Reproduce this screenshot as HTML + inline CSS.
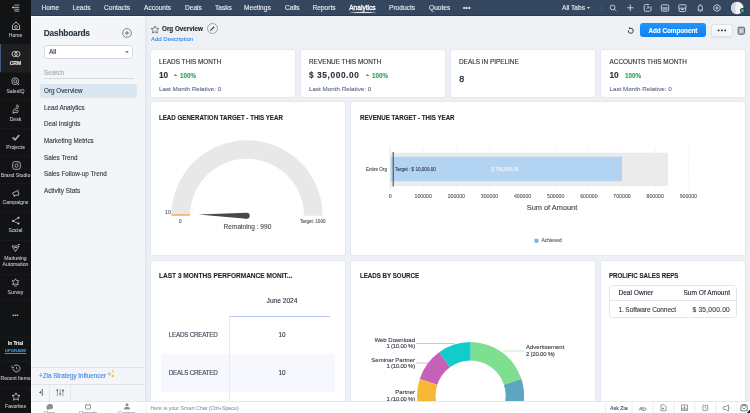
<!DOCTYPE html>
<html><head><meta charset="utf-8">
<style>
*{margin:0;padding:0;box-sizing:border-box}
html,body{width:750px;height:413px;overflow:hidden;background:#eef0f4;font-family:"Liberation Sans",sans-serif;position:relative}
#root div{-webkit-text-stroke-width:0.12px}
.a{position:absolute;white-space:nowrap}
#lsb{left:0;top:0;width:31px;height:413px;background:#121314}
.si{position:absolute;left:0;width:31px;text-align:center;color:#bbbcbf;font-size:5.1px;line-height:5px}
.sep{position:absolute;left:0;width:31px;height:1px;background:#19191b}
#nav{left:31px;top:0;width:719px;height:16px;background:#34475f}
.ni{position:absolute;top:3px;color:#e6ebf1;font-size:6.6px;line-height:10px}
#dp{left:31px;top:16px;width:114.5px;height:385px;background:#f3f5f8;border-right:1px solid #e4e7ec;box-shadow:1px 0 1.5px rgba(40,50,70,0.05)}
.dl{position:absolute;left:13px;color:#333a47;font-size:6.3px;line-height:8px;margin-top:0.3px}
.card{position:absolute;background:#fff;border:1px solid #e1e9f6;border-radius:3px}
.ct{position:absolute;color:#2b2f36;font-size:6.4px;line-height:8px}
.ttl{position:absolute;color:#1f2329;font-size:6.85px;line-height:8px;font-weight:bold;transform:scaleX(0.9);transform-origin:0 0}
#bb{left:31px;top:401px;width:719px;height:12px;background:#fff;border-top:1px solid #e4e7ec}
</style></head><body>
<div id="root" style="position:absolute;left:0;top:0;width:750px;height:413px;overflow:hidden;will-change:transform;background:#eef0f4">

<!-- left sidebar -->
<div class="a" id="lsb">
  <div class="sep" style="top:43.5px"></div>
  <div style="position:absolute;left:0;top:43.5px;width:31px;height:28.3px;background:#1e1f20;border-left:1.6px solid #405a7b"></div>
  <div class="sep" style="top:72px"></div>
  <div class="sep" style="top:100px"></div>
  <div class="sep" style="top:127.5px"></div>
  <div class="sep" style="top:155.5px"></div>
  <div class="sep" style="top:183px"></div>
  <div class="sep" style="top:211px"></div>
  <div class="sep" style="top:239.5px"></div>
  <div class="sep" style="top:273.5px"></div>
  <div class="sep" style="top:300px"></div>
  <div class="sep" style="top:336.5px"></div>
  <div class="sep" style="top:360.5px"></div>
  <div class="sep" style="top:387.5px"></div>
  <!-- collapse icon -->
  <svg class="a" style="left:0;top:0" width="31" height="16" viewBox="0 0 31 16"><path d="M14.3 5.1H19.2M13 7.4H19.2M14.3 9.3H19.2M14.3 11.1H19.2" stroke="#c4c5c7" stroke-width="0.85" fill="none"/><path d="M11.6 7.4L13.6 6V8.8Z" fill="#c4c5c7"/></svg>
  <svg class="a" style="left:0;top:16px" width="31" height="16" viewBox="0 16 31 16"><path d="M12.4 25.2L16 22L19.6 25.2V29.5H12.4Z" stroke="#c4c5c7" stroke-width="0.9" stroke-linejoin="round" fill="none"/><circle cx="16" cy="26.9" r="1.5" stroke="#c4c5c7" stroke-width="0.7" fill="none"/><path d="M15.5 26.2V27.6L16.6 26.9Z" fill="#c4c5c7"/></svg>
  <div class="si" style="top:33px">Home</div>
  <svg class="a" style="left:11px;top:50px" width="10" height="8" viewBox="0 0 10 8"><circle cx="3.6" cy="4" r="2.6" stroke="#d0d1d3" stroke-width="0.9" fill="none"/><circle cx="6.4" cy="4" r="2.6" stroke="#d0d1d3" stroke-width="0.9" fill="none"/></svg>
  <div class="si" style="top:61px;color:#e8e9ea;font-weight:bold">CRM</div>
  <svg class="a" style="left:11px;top:77px" width="9" height="9" viewBox="0 0 9 9"><circle cx="4.2" cy="4.2" r="3.4" stroke="#c8c9cb" stroke-width="0.8" fill="none"/><circle cx="4.2" cy="4.2" r="1.5" stroke="#c8c9cb" stroke-width="0.7" fill="none"/><path d="M5.5 5.5L8 8" stroke="#c8c9cb" stroke-width="0.8"/></svg>
  <div class="si" style="top:88.5px">SalesIQ</div>
  <svg class="a" style="left:0;top:100px" width="31" height="16" viewBox="0 100 31 16"><circle cx="17.4" cy="106.2" r="1.15" stroke="#b9babd" stroke-width="0.8" fill="none"/><path d="M17.9 108C16.3 108.4 14.8 108.8 14 109.3C13.3 109.8 13.2 110.5 13.2 111.3V113.4M13.3 112.6H17C17.7 112.6 18.1 112.2 18.1 111.5V110.6H15.2" stroke="#b9babd" stroke-width="0.85" fill="none" stroke-linecap="round"/></svg>
  <div class="si" style="top:117px">Desk</div>
  <svg class="a" style="left:0;top:128px" width="31" height="16" viewBox="0 128 31 16"><path d="M12.5 137.3L15.1 139.8L19.3 135" stroke="#a9aaad" stroke-width="1.7" fill="none"/></svg>
  <div class="si" style="top:144.5px">Projects</div>
  <svg class="a" style="left:11.5px;top:161px" width="9" height="9" viewBox="0 0 9 9"><rect x="0.7" y="0.7" width="7.6" height="7.6" rx="2" stroke="#c8c9cb" stroke-width="0.8" fill="none"/><circle cx="4.5" cy="4.8" r="1.6" stroke="#c8c9cb" stroke-width="0.7" fill="none"/><path d="M5.5 2.5L6.5 2" stroke="#c8c9cb" stroke-width="0.7"/></svg>
  <div class="si" style="top:172.5px">Brand Studio</div>
  <svg class="a" style="left:11px;top:189px" width="10" height="9" viewBox="0 0 10 9"><path d="M1.5 4L7 1.5L8 6L3 6.5Z M3 6.5L3.5 8" stroke="#c8c9cb" stroke-width="0.8" fill="none"/></svg>
  <div class="si" style="top:200px">Campaigns</div>
  <svg class="a" style="left:11px;top:216px" width="10" height="9" viewBox="0 0 10 9"><circle cx="2" cy="5" r="1" fill="#c8c9cb"/><circle cx="7.5" cy="1.8" r="1" fill="#c8c9cb"/><circle cx="7.5" cy="7.5" r="1" fill="#c8c9cb"/><path d="M2 5L7.5 1.8M2 5L7.5 7.5" stroke="#c8c9cb" stroke-width="0.7"/></svg>
  <div class="si" style="top:227.5px">Social</div>
  <svg class="a" style="left:11px;top:244px" width="10" height="9" viewBox="0 0 10 9"><path d="M1 2H8L4.5 7.5Z M3 3.5H6.2" stroke="#c8c9cb" stroke-width="0.8" fill="none"/><path d="M7 0.5L9 0.5" stroke="#c8c9cb" stroke-width="0.7"/></svg>
  <div class="si" style="top:256px">Marketing</div>
  <div class="si" style="top:262px">Automation</div>
  <svg class="a" style="left:11px;top:278px" width="9" height="9" viewBox="0 0 9 9"><path d="M4.5 0.8L5.6 2.6L7.8 2.8L6.6 4.6L7.2 6.8L4.5 6L1.8 6.8L2.4 4.6L1.2 2.8L3.4 2.6Z" stroke="#c8c9cb" stroke-width="0.8" fill="none"/><path d="M3 8H6" stroke="#c8c9cb" stroke-width="0.7"/></svg>
  <div class="si" style="top:289.5px">Survey</div>
  <div class="si" style="top:312.6px;font-size:5.5px;letter-spacing:0.3px;color:#c8c9cb">•••</div>
  <div class="si" style="top:340.8px;color:#f0f0f0;font-weight:bold;font-size:4.7px">In Trial</div>
  <div class="si" style="top:348.3px;color:#2f9ad6;font-weight:bold;font-size:4.3px;text-decoration:underline">UPGRADE</div>
  <svg class="a" style="left:11px;top:363.5px" width="10" height="9" viewBox="0 0 10 9"><path d="M2 4.5A3.5 3.5 0 1 0 3 2" stroke="#c8c9cb" stroke-width="0.8" fill="none"/><path d="M1 1.5V3.5H3" stroke="#c8c9cb" stroke-width="0.7" fill="none"/><path d="M5.5 2.8V4.8L6.8 5.6" stroke="#c8c9cb" stroke-width="0.7" fill="none"/></svg>
  <div class="si" style="top:375.5px">Recent Items</div>
  <svg class="a" style="left:11px;top:392px" width="10" height="9" viewBox="0 0 10 9"><path d="M5 0.8L6.2 3.3L9 3.6L6.9 5.4L7.5 8.2L5 6.8L2.5 8.2L3.1 5.4L1 3.6L3.8 3.3Z" stroke="#c8c9cb" stroke-width="0.8" fill="none"/></svg>
  <div class="si" style="top:404px">Favorites</div>
</div>

<!-- top nav -->
<div class="a" id="nav">
  <div class="ni" style="left:10.5px">Home</div>
  <div class="ni" style="left:41.5px">Leads</div>
  <div class="ni" style="left:73px">Contacts</div>
  <div class="ni" style="left:113px">Accounts</div>
  <div class="ni" style="left:154px">Deals</div>
  <div class="ni" style="left:184px">Tasks</div>
  <div class="ni" style="left:213px">Meetings</div>
  <div class="ni" style="left:254px">Calls</div>
  <div class="ni" style="left:281.5px">Reports</div>
  <div class="ni" style="left:318.2px;color:#fff;-webkit-text-stroke-width:0.3px">Analytics</div>
  <div style="position:absolute;left:318.5px;top:12.3px;width:26px;height:0.9px;background:linear-gradient(90deg,rgba(220,226,234,0.2),#dfe4ea 25%,#dfe4ea 75%,rgba(220,226,234,0.2))"></div>
  <div class="ni" style="left:358px">Products</div>
  <div class="ni" style="left:398px">Quotes</div>
  <div class="ni" style="left:432px;font-weight:bold;letter-spacing:0.3px">•••</div>
  <div class="ni" style="left:531px">All Tabs</div>
  <svg style="position:absolute;left:555.5px;top:7px" width="3" height="2" viewBox="0 0 3 2"><path d="M0 0.1H3L1.5 1.9Z" fill="#e6ebf1"/></svg>
  <div style="position:absolute;left:570px;top:2.5px;width:1px;height:9.5px;background:#3f536b"></div>
  <div style="position:absolute;left:0;top:15px;width:719px;height:1px;background:#283a50"></div>
</div>
<svg class="a" style="left:600px;top:0" width="150" height="16" viewBox="600 0 150 16">
  <g fill="none" stroke="#d9dee5" stroke-width="0.85">
    <circle cx="612.6" cy="7.4" r="2.4"/>
    <path d="M614.4 9.2L616.4 11"/>
    <path d="M630.3 4.6V11M627.1 7.8H633.5"/>
    <path d="M649.2 4.5H645.5A1.3 1.3 0 0 0 644.2 5.8V10A1.3 1.3 0 0 0 645.5 11.3H649.7A1.3 1.3 0 0 0 651 10V6.3"/>
    <path d="M646.3 9.2L648.8 6.7M647 6.7H648.8V8.5" stroke-width="0.7"/>
    <rect x="661.3" y="4.8" width="7.4" height="6.4" rx="1.2"/>
    <rect x="662.4" y="7" width="5.2" height="3.3" fill="#8d98a8" stroke="none"/>
    <path d="M679.5 4.8H685.3A0.8 0.8 0 0 1 686 5.5V8.2H678.8V5.5A0.8 0.8 0 0 1 679.5 4.8Z M679.2 8.2V10.7A0.8 0.8 0 0 0 680 11.5H684.8A0.8 0.8 0 0 0 685.6 10.7V8.2 M681 9.5H683.8"/>
    <path d="M697.6 10.2H703M698.3 10.2V7.3A2 2 0 0 1 702.3 7.3V10.2M700.3 4.2V5.2M699.5 11.3H701.1"/>
    <path d="M717 4.6L720.1 6.3V9.7L717 11.4L713.9 9.7V6.3Z"/>
    <circle cx="717" cy="8" r="1.1"/>
  </g>
  <circle cx="737.2" cy="8" r="6.2" fill="#f4f5f7"/>
  <path d="M737.2 1.8A6.2 6.2 0 0 0 737.2 14.2C735 12 734.5 4 737.2 1.8Z" fill="#d3d7de"/>
  <circle cx="742.4" cy="10.6" r="2.5" fill="#2b3c52"/>
  <circle cx="742.4" cy="10.6" r="1.7" fill="#22c25a"/>
</svg>

<!-- dashboards panel -->
<div class="a" id="dp">
  <div class="a" style="left:0;top:0;width:1px;height:385px;background:#fcfdfe"></div>
  <div class="a" style="left:0;top:0;width:114px;height:1px;background:#fcfdfe"></div>
  <div class="a" style="left:12.8px;top:11px;font-size:8.3px;line-height:12px;font-weight:bold;color:#2d3542;letter-spacing:-0.2px">Dashboards</div>
  <svg class="a" style="left:91.4px;top:11.5px" width="10" height="10" viewBox="0 0 10 10"><circle cx="5" cy="5" r="4.4" stroke="#4a5262" stroke-width="0.65" fill="none"/><path d="M5 2.7V7.3M2.7 5H7.3" stroke="#3b4350" stroke-width="0.65"/></svg>
  <div class="a" style="left:12.8px;top:28.5px;width:89.6px;height:14.6px;background:#fff;border:1px solid #d5dbe3;border-radius:2.5px"></div>
  <div class="a" style="left:18px;top:31.5px;font-size:6.5px;line-height:8px;color:#2f3541">All</div>
  <svg class="a" style="left:94px;top:34.8px" width="4" height="2" viewBox="0 0 4 2"><path d="M0.2 0.2H3.8L2 1.9Z" fill="#4a5160"/></svg>
  <div class="a" style="left:13px;top:52.5px;font-size:6.3px;line-height:8px;color:#a3aab5">Search</div>
  <div class="a" style="left:13px;top:62.2px;width:89.5px;height:1px;background:#d6dbe2"></div>
  <div class="a" style="left:8.6px;top:67.9px;width:97.8px;height:14px;background:#dbe6f3;border-radius:3px"></div>
  <div class="dl" style="top:71px">Org Overview</div>
  <div class="dl" style="top:87.5px">Lead Analytics</div>
  <div class="dl" style="top:104px">Deal Insights</div>
  <div class="dl" style="top:121px">Marketing Metrics</div>
  <div class="dl" style="top:137.5px">Sales Trend</div>
  <div class="dl" style="top:154px">Sales Follow-up Trend</div>
  <div class="dl" style="top:171px">Activity Stats</div>
  <div class="a" style="left:0;top:350.5px;width:114px;height:1px;background:#e0e5ec"></div>
  <div class="a" style="left:8px;top:355.5px;font-size:6.3px;line-height:8px;color:#3a8beb">+Zia Strategy Influencer</div>
  <svg class="a" style="left:74px;top:353px" width="12" height="12" viewBox="74 369 12 12"><path d="M75.4 371.5L76 373.3L77.8 373.9L76 374.5L75.4 376.3L74.8 374.5L73 373.9L74.8 373.3Z" fill="#f0b52a" transform="translate(3 0)"/><path d="M81.8 369.6L82.2 370.8L83.4 371.2L82.2 371.6L81.8 372.8L81.4 371.6L80.2 371.2L81.4 370.8Z" fill="#f0b52a"/><path d="M81.8 374.2L82.3 375.5L83.6 376L82.3 376.5L81.8 377.8L81.3 376.5L80 376L81.3 375.5Z" fill="#f0b52a"/></svg>
  <div class="a" style="left:0;top:368px;width:114px;height:1px;background:#e0e5ec"></div>
  <div class="a" style="left:18px;top:369px;width:1px;height:16px;background:#e3e8ee"></div>
  <div class="a" style="left:39px;top:369px;width:1px;height:16px;background:#e3e8ee"></div>
  <svg class="a" style="left:7px;top:372px" width="6" height="8" viewBox="0 0 6 8"><path d="M4.3 1V7.7" stroke="#4a5160" stroke-width="0.9"/><path d="M0.9 4.3L3 2.9V5.7Z" fill="#4a5160"/></svg>
  <svg class="a" style="left:25px;top:372px" width="9" height="9" viewBox="0 0 9 9"><path d="M1.3 1V8M4.2 1V8M6.9 1V8" stroke="#5a6170" stroke-width="0.6"/><path d="M0.5 2.2H2.1M3.4 5.7H5M6.1 2.6H7.7" stroke="#4a5160" stroke-width="1.1"/></svg>
</div>


<!-- main header -->
<svg class="a" style="left:150px;top:24.5px" width="10" height="9" viewBox="0 0 10 9"><path d="M5 0.9L6.2 3.2L8.9 3.6L6.9 5.4L7.4 8L5 6.8L2.6 8L3.1 5.4L1.1 3.6L3.8 3.2Z" stroke="#5a6578" stroke-width="0.85" stroke-linejoin="round" fill="none"/></svg>
<div class="a" style="left:162px;top:24.3px;font-size:6.3px;line-height:9px;font-weight:bold;color:#22272e">Org Overview</div>
<svg class="a" style="left:207.1px;top:23px" width="11" height="11" viewBox="0 0 11 11"><circle cx="5.5" cy="5.5" r="5" stroke="#66738a" stroke-width="0.6" fill="none"/><path d="M3.4 7.6L6.8 4.2" stroke="#23324a" stroke-width="1.1"/><path d="M6.6 3.6L7.4 4.4" stroke="#23324a" stroke-width="1"/></svg>
<div class="a" style="left:151px;top:35px;font-size:6px;line-height:8px;color:#3b8eec">Add Description</div>
<svg class="a" style="left:624px;top:24px" width="14" height="14" viewBox="624 24 14 14"><path d="M630.6 28.3A2.5 2.5 0 1 1 628.3 30.4" stroke="#353b47" stroke-width="1" fill="none"/><path d="M629.2 27L631.3 28.3L629.2 29.6Z" fill="#353b47"/></svg>
<div class="a" style="left:640px;top:23.1px;width:65.8px;height:14px;background:linear-gradient(#2294ff,#0e80f2);border-radius:3px;color:#fff;font-size:6.3px;line-height:15.5px;text-align:center;font-weight:bold">Add Component</div>
<div class="a" style="left:711px;top:24px;width:22px;height:12.5px;background:linear-gradient(#fbfcfd,#f1f3f7);border:1px solid #dde2ea;border-radius:3px;box-shadow:0 0.5px 1px rgba(0,0,0,0.06)"></div>
<svg class="a" style="left:716px;top:28.3px" width="12" height="5" viewBox="0 0 12 5"><circle cx="2.6" cy="2.4" r="0.95" fill="#2a2f37"/><circle cx="5.9" cy="2.4" r="0.95" fill="#2a2f37"/><circle cx="9.2" cy="2.4" r="0.95" fill="#2a2f37"/></svg>
<svg class="a" style="left:734px;top:24px" width="14" height="14" viewBox="734 24 14 14"><path d="M739 27.2H743.3A1.3 1.3 0 0 1 744.6 28.5V32.5A1.8 1.8 0 0 1 742.8 34.3H739.3A1.2 1.2 0 0 1 738.1 33.1V28.1A0.9 0.9 0 0 1 739 27.2Z" fill="#b3b8c1" stroke="#464d59" stroke-width="0.85"/><path d="M739.7 32.6L741.3 29.4L742.2 31.4M740.2 31.8H742.6" stroke="#f4f5f7" stroke-width="0.6" fill="none"/></svg>

<!-- row 1 cards -->
<div class="card" style="left:150px;top:48.6px;width:145.5px;height:49.1px"></div>
<div class="card" style="left:300px;top:48.6px;width:145.5px;height:49.1px"></div>
<div class="card" style="left:450px;top:48.6px;width:145.5px;height:49.1px"></div>
<div class="card" style="left:600px;top:48.6px;width:145.5px;height:49.1px"></div>

<!-- row 2 -->
<div class="card" style="left:150px;top:101px;width:195.5px;height:155px"></div>
<div class="card" style="left:350px;top:101px;width:395.5px;height:155px"></div>

<!-- row 3 -->
<div class="card" style="left:150px;top:259.6px;width:195.5px;height:160px"></div>
<div class="card" style="left:350px;top:259.6px;width:245.5px;height:160px"></div>
<div class="card" style="left:600px;top:259.6px;width:145.5px;height:160px"></div>


<!-- row1 contents -->
<div class="ct" style="left:159px;top:57.7px">LEADS THIS MONTH</div>
<div class="a" style="left:159px;top:70px;font-size:8.3px;line-height:10px;color:#2c3440;font-weight:bold">10</div>
<svg class="a" style="left:172.9px;top:73.8px" width="5" height="2.6" viewBox="0 0 5 2.6"><path d="M0 2.6L2.5 0L5 2.6Z" fill="#2ba55e"/></svg>
<div class="a" style="left:180px;top:71.5px;font-size:6.3px;line-height:8px;color:#2ba55e;font-weight:bold">100%</div>
<div class="a" style="left:159px;top:84.6px;font-size:6.25px;line-height:8px;color:#5f6e8a">Last Month Relative: 0</div>

<div class="ct" style="left:309px;top:57.7px">REVENUE THIS MONTH</div>
<div class="a" style="left:309px;top:70px;font-size:8.3px;line-height:10px;color:#2c3440;font-weight:bold;letter-spacing:0.6px">$ 35,000.00</div>
<svg class="a" style="left:364.9px;top:73.8px" width="5" height="2.6" viewBox="0 0 5 2.6"><path d="M0 2.6L2.5 0L5 2.6Z" fill="#2ba55e"/></svg>
<div class="a" style="left:372px;top:71.5px;font-size:6.3px;line-height:8px;color:#2ba55e;font-weight:bold">100%</div>
<div class="a" style="left:309px;top:84.6px;font-size:6.25px;line-height:8px;color:#5f6e8a">Last Month Relative: 0</div>

<div class="ct" style="left:459px;top:57.7px">DEALS IN PIPELINE</div>
<div class="a" style="left:459.3px;top:74.4px;font-size:8.9px;line-height:10px;color:#232c3c;-webkit-text-stroke:0.3px #232c3c">8</div>

<div class="ct" style="left:609.5px;top:57.7px">ACCOUNTS THIS MONTH</div>
<div class="a" style="left:609.5px;top:70px;font-size:8.3px;line-height:10px;color:#2c3440;font-weight:bold">10</div>
<div class="a" style="left:625px;top:71.5px;font-size:6.3px;line-height:8px;color:#2ba55e;font-weight:bold">100%</div>
<div class="a" style="left:609.5px;top:84.6px;font-size:6.25px;line-height:8px;color:#5f6e8a">Last Month Relative: 0</div>

<!-- lead gen gauge -->
<div class="ttl" style="left:159px;top:113.5px">LEAD GENERATION TARGET - THIS YEAR</div>
<svg class="a" style="left:150px;top:102px" width="195" height="153" viewBox="150 102 195 153">
  <path d="M171.4 215.8A75.6 75.6 0 0 1 322.6 215.8H304A57 57 0 0 0 190 215.8Z" fill="#e8e8e8"/>
  <rect x="171.4" y="214" width="18.6" height="1.8" fill="#f4b77a"/>
  <path d="M198.3 214.4L246.7 212.7L246.7 218.7Z" fill="#484848"/>
  <circle cx="246.7" cy="215.7" r="3" fill="#484848"/>
  <text x="165" y="214" font-size="5.2" fill="#555c66" font-family="Liberation Sans" stroke="#555c66" stroke-width="0.12">10</text>
  <text x="179" y="223" font-size="4.6" fill="#555c66" font-family="Liberation Sans" stroke="#555c66" stroke-width="0.12">0</text>
  <text x="300" y="222.6" font-size="4.6" fill="#555c66" font-family="Liberation Sans" stroke="#555c66" stroke-width="0.12">Target: 1000</text>
  <text x="223.6" y="229.2" font-size="6.55" fill="#4a4f57" font-family="Liberation Sans" stroke="#4a4f57" stroke-width="0.12">Remaining : 990</text>
</svg>

<!-- revenue target -->
<div class="ttl" style="left:359.5px;top:113.5px">REVENUE TARGET - THIS YEAR</div>
<svg class="a" style="left:350px;top:102px" width="395" height="153" viewBox="350 102 395 153">
  <g stroke="#e2e2e2" stroke-width="0.6" stroke-dasharray="1.2 1.2">
    <line x1="423.2" y1="148" x2="423.2" y2="190"/>
    <line x1="456.3" y1="148" x2="456.3" y2="190"/>
    <line x1="489.5" y1="148" x2="489.5" y2="190"/>
    <line x1="522.6" y1="148" x2="522.6" y2="190"/>
    <line x1="555.7" y1="148" x2="555.7" y2="190"/>
    <line x1="588.9" y1="148" x2="588.9" y2="190"/>
    <line x1="622" y1="148" x2="622" y2="190"/>
    <line x1="655.2" y1="148" x2="655.2" y2="190"/>
    <line x1="688.3" y1="148" x2="688.3" y2="190"/>
  </g>
  <rect x="390.6" y="152.7" width="277.4" height="33.3" fill="#ebebeb"/>
  <rect x="390.6" y="156.7" width="231.4" height="24.5" fill="#b3d3f3"/>
  <line x1="390.2" y1="147" x2="390.2" y2="190" stroke="#d8e0ea" stroke-width="0.8"/>
  <rect x="392.7" y="151.9" width="1.05" height="34.6" fill="#434a55"/>
  <text x="366" y="170.8" font-size="4.6" fill="#4f5661" font-family="Liberation Sans" stroke="#4f5661" stroke-width="0.12">Entire Org</text>
  <text x="395" y="170.8" font-size="4.6" fill="#3a414c" font-family="Liberation Sans" stroke="#3a414c" stroke-width="0.12">Target : $ 10,000.00</text>
  <text x="491.5" y="170.8" font-size="4.6" fill="#eef5fd" font-family="Liberation Sans" stroke="#eef5fd" stroke-width="0.12">$ 700,000.00</text>
  <g font-size="5.2" fill="#555c66" font-family="Liberation Sans" text-anchor="middle" stroke="#555c66" stroke-width="0.12">
    <text x="390.2" y="197.9">0</text>
    <text x="423.2" y="197.9">100000</text>
    <text x="456.3" y="197.9">200000</text>
    <text x="489.5" y="197.9">300000</text>
    <text x="522.6" y="197.9">400000</text>
    <text x="555.7" y="197.9">500000</text>
    <text x="588.9" y="197.9">600000</text>
    <text x="622" y="197.9">700000</text>
    <text x="655.2" y="197.9">800000</text>
    <text x="688.3" y="197.9">900000</text>
  </g>
  <text x="552" y="209.7" font-size="7.4" fill="#3e4654" font-family="Liberation Sans" text-anchor="middle" stroke="#3e4654" stroke-width="0.12">Sum of Amount</text>
  <rect x="534.5" y="238.8" width="4" height="4" fill="#7ab2ee"/>
  <text x="541.5" y="242.4" font-size="4.9" fill="#555c66" font-family="Liberation Sans" stroke="#555c66" stroke-width="0.12">Achieved</text>
</svg>

<!-- performance table -->
<div class="ttl" style="left:159px;top:272px;transform:scaleX(0.955)">LAST 3 MONTHS PERFORMANCE MONIT...</div>
<div class="a" style="left:229px;top:297px;width:106px;text-align:center;font-size:6.6px;line-height:8px;color:#2f3541">June 2024</div>
<div class="a" style="left:228.7px;top:315.5px;width:101.6px;height:1px;background:#b7c4f2"></div>
<div class="a" style="left:161px;top:353.8px;width:173.7px;height:38px;background:#f6f8fe"></div>
<div class="a" style="left:228.5px;top:316px;width:1px;height:90px;background:#e6e9ef"></div>
<div class="a" style="left:168.8px;top:330.8px;font-size:6.3px;line-height:8px;color:#3d4656;letter-spacing:-0.25px">LEADS CREATED</div>
<div class="a" style="left:229px;top:330.7px;width:106px;text-align:center;font-size:6.3px;line-height:8px;color:#2f3541">10</div>
<div class="a" style="left:168.8px;top:368.7px;font-size:6.3px;line-height:8px;color:#3d4656;letter-spacing:-0.25px">DEALS CREATED</div>
<div class="a" style="left:229px;top:368.6px;width:106px;text-align:center;font-size:6.3px;line-height:8px;color:#2f3541">10</div>

<!-- leads by source -->
<div class="ttl" style="left:359.5px;top:272px">LEADS BY SOURCE</div>
<svg class="a" style="left:350px;top:260px" width="245" height="153" viewBox="350 260 245 153">
  <g transform="translate(470.6 395.6)">
    <path d="M0 -53.5A53.5 53.5 0 0 1 50.88 -16.53L33.29 -10.82A35 35 0 0 0 0 -35Z" fill="#7fdf90"/>
    <path d="M50.88 -16.53A53.5 53.5 0 0 1 0 53.5L0 35A35 35 0 0 0 33.29 -10.82Z" fill="#5ea5c2"/>
    <path d="M0 -53.5A53.5 53.5 0 0 0 -31.45 -43.28L-20.57 -28.32A35 35 0 0 1 0 -35Z" fill="#12cccc"/>
    <path d="M-31.45 -43.28A53.5 53.5 0 0 0 -50.88 -16.53L-33.29 -10.82A35 35 0 0 1 -20.57 -28.32Z" fill="#c561b7"/>
    <path d="M-50.88 -16.53A53.5 53.5 0 0 0 -50.88 16.53L-33.29 10.82A35 35 0 0 1 -33.29 -10.82Z" fill="#f7b838"/>
  </g>
  <polyline points="416,343.5 454,343.5 456,345" stroke="#12cccc" stroke-width="0.5" fill="none"/>
  <polyline points="416,363 432,363 434,365" stroke="#c561b7" stroke-width="0.5" fill="none"/>
  <polyline points="503,351 524,351" stroke="#7fdf90" stroke-width="0.5" fill="none"/>
  <g font-size="6" fill="#3a414c" font-family="Liberation Sans" text-anchor="end" stroke="#3a414c" stroke-width="0.12">
    <text x="415" y="341.8">Web Download</text>
    <text x="415" y="348.3" letter-spacing="-0.22">1 (10.00 %)</text>
    <text x="415" y="361.8">Seminar Partner</text>
    <text x="415" y="368.3" letter-spacing="-0.22">1 (10.00 %)</text>
    <text x="415" y="393.8">Partner</text>
    <text x="415" y="400.8" letter-spacing="-0.22">1 (10.00 %)</text>
  </g>
  <g font-size="6" fill="#3a414c" font-family="Liberation Sans" stroke="#3a414c" stroke-width="0.12">
    <text x="526" y="349.4">Advertisement</text>
    <text x="526" y="355.8" letter-spacing="-0.22">2 (20.00 %)</text>
  </g>
</svg>

<!-- prolific sales reps -->
<div class="ttl" style="left:609px;top:272px">PROLIFIC SALES REPS</div>
<div class="a" style="left:609.1px;top:285.4px;width:127.5px;height:32.8px;border:1px solid #e1e6ee;border-radius:3.5px"></div>
<div class="a" style="left:609.2px;top:300px;width:127.6px;height:1px;background:#e1e6ee"></div>
<div class="a" style="left:618.4px;top:289.2px;font-size:6.6px;line-height:8px;color:#232830">Deal Owner</div>
<div class="a" style="left:609px;top:289.2px;width:121px;text-align:right;font-size:6.6px;line-height:8px;color:#232830">Sum Of Amount</div>
<div class="a" style="left:618.4px;top:305.7px;font-size:6.6px;line-height:8px;color:#3a414c;letter-spacing:-0.12px">1. Software Connect</div>
<div class="a" style="left:609px;top:305.7px;width:121px;text-align:right;font-size:6.6px;line-height:8px;color:#3a414c;letter-spacing:0.25px">$ 35,000.00</div>

<!-- bottom bar -->
<div class="a" id="bb"></div>
<svg class="a" style="left:0;top:398px" width="750" height="15" viewBox="0 398 750 15">
  <g stroke="#e6e9ee" stroke-width="0.8">
    <line x1="146" y1="401.5" x2="146" y2="413"/>
    <line x1="605.5" y1="401.5" x2="605.5" y2="413"/>
    <line x1="632" y1="401.5" x2="632" y2="413"/>
    <line x1="653" y1="401.5" x2="653" y2="413"/>
    <line x1="674" y1="401.5" x2="674" y2="413"/>
    <line x1="695" y1="401.5" x2="695" y2="413"/>
    <line x1="716" y1="401.5" x2="716" y2="413"/>
    <line x1="737" y1="401.5" x2="737" y2="413"/>
  </g>
  <g fill="none" stroke="#6b717c" stroke-width="0.7">
    <!-- chats -->
    <path d="M46.5 408.5C46 405.5 48 404 50 404C52.3 404 53.5 405.5 53 407.5C52.6 409 51 409.5 49.5 409.3L47.5 410Z" fill="#8a9099" stroke="none"/>
    <!-- channels -->
    <rect x="85.5" y="405" width="5" height="4" rx="0.8"/>
    <path d="M86 403.5L87 405M90 403.5L89 405"/>
    <!-- contacts -->
    <circle cx="127" cy="404.8" r="1.5" fill="#8a9099" stroke="none"/>
    <path d="M124 409.5C124 407.5 125.5 406.8 127 406.8C128.5 406.8 130 407.5 130 409.5Z" fill="#8a9099" stroke="none"/>
    <!-- right icons -->
    <path d="M639 410.5L641 407L642.5 410.5M639.8 409.2H641.8M643 406.5V410.5C644.5 410.5 646 410.5 646 409C646 407.5 644.5 407.8 643 408.3"/>
    <path d="M661 404.8H664.3L666 406.5V410.8H661Z M663 407.5V409.5M662 408.5H664"/>
    <path d="M681.5 405H687.5V410.5H681.5Z M684.5 405.8V408.5M683.3 407.5L684.5 408.6L685.7 407.5 M681.5 409H687.5"/>
    <circle cx="705.3" cy="408" r="2.7"/>
    <path d="M705.3 406.6V408.2L706.3 408.8M702.6 405.4L703.8 404.5M708 405.4L706.8 404.5M703.5 410.5L702.8 411.3M707.1 410.5L707.8 411.3"/>
    <path d="M723.3 406.8H725L728.5 405V411L725 409.3H723.3Z M729.5 408H730.5"/>
    <path d="M740.8 405.8H747.2V410.8H740.8Z M742.2 405.8V404.5H745.8V405.8 M742.5 407.5C743 409 745 409 745.5 407.5" stroke-width="0.9"/>
  </g>
  <path d="M750 409.5V413H746.8Z" fill="#1f2937"/>
  <text x="610" y="409.9" font-size="5.3" fill="#4a5160" font-family="Liberation Sans" stroke="#4a5160" stroke-width="0.12">Ask Zia</text>
  <text x="150.5" y="409.9" font-size="5.3" fill="#9ca2ab" font-family="Liberation Sans" stroke="#9ca2ab" stroke-width="0.12">Here is your Smart Chat (Ctrl+Space)</text>
  <g font-size="4.4" fill="#8f959e" font-family="Liberation Sans" text-anchor="middle" stroke="#8f959e" stroke-width="0.12">
    <text x="49.5" y="413.6">Chats</text>
    <text x="88" y="413.6">Channels</text>
    <text x="127" y="413.6">Contacts</text>
  </g>
</svg>
</div>
</body></html>
